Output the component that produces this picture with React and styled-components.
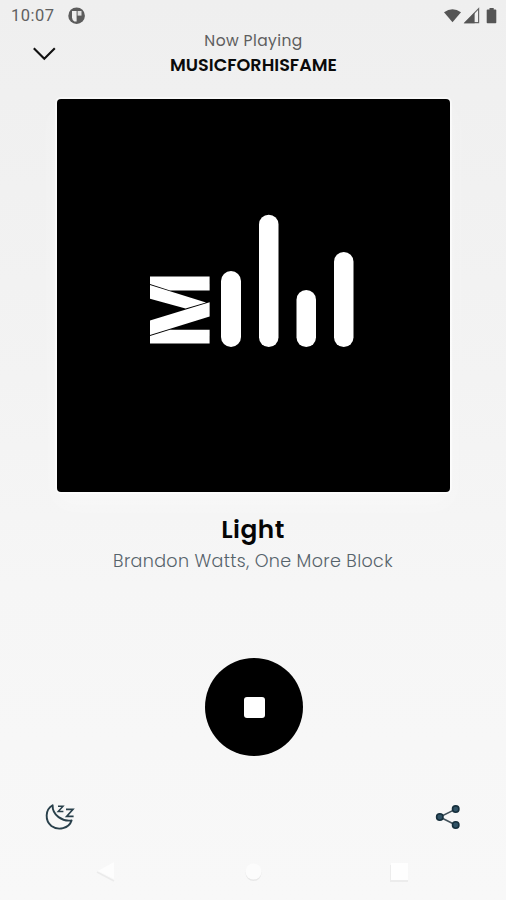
import React from 'react'
import styled, { createGlobalStyle } from 'styled-components'

const App = () => {
  return (
    <Screen>
      <GlobalStyle />
      <StatusBar>
        <Clock>10:07</Clock>
        <NotificationIcon />
        <StatusIcons />
      </StatusBar>
      <Header>
        <IconButton aria-label="Close player">
          <svg width="24" height="16" viewBox="0 0 24 16" fill="none">
            <path d="M1.8 2.2 12.3 12.8 22.8 2.2" stroke="#111" strokeWidth="2.1" />
          </svg>
        </IconButton>
        <Heading>
          <Caption>Now Playing</Caption>
          <Station>MUSICFORHISFAME</Station>
        </Heading>
      </Header>
      <Cover>
        <Logo />
      </Cover>
      <Track>
        <Title>Light</Title>
        <Artist>Brandon Watts, One More Block</Artist>
      </Track>
      <StopButton aria-label="Stop">
        <StopSquare />
      </StopButton>
      <Actions>
        <IconButton aria-label="Sleep timer">
          <SleepIcon />
        </IconButton>
        <IconButton aria-label="Share">
          <ShareIcon />
        </IconButton>
      </Actions>
      <SystemNav />
    </Screen>
  )
}

const NotificationIcon = () => (
  <svg width="18" height="18" viewBox="0 0 18 18">
    <circle cx="8.6" cy="8.7" r="8.3" fill="#5c5c5c" />
    <path d="M4 4h4.6v10.4H6.4Q4 13 4 10.6z" fill="#f0f0f0" />
    <path d="M9.6 4h3.9v4.6H9.6z" fill="#e0e0e0" />
  </svg>
)

const StatusIcons = () => (
  <svg width="56" height="20" viewBox="0 0 56 20" fill="#555">
    <path d="M2 6.2Q10.5.4 19 6.2l-8.5 10z" />
    <path d="M23 16.7 36.6 2.7v14z" fill="none" stroke="#666" strokeWidth="1.2" />
    <path d="M22 17.2 32.6 6.4v10.8z" />
    <path d="M45.5 3.4h2V2h4.2v1.4h1.8q.8 0 .8.8v12.2q0 .8-.8.8h-8q-.8 0-.8-.8V4.2q0-.8.8-.8z" />
  </svg>
)

const Logo = () => (
  <svg width="204" height="134" viewBox="0 0 204 134" fill="#fff">
    <path d="M0 62.5h59.6V76.4H20L0 70.1z" />
    <path d="M0 71 56 88.4 35.5 94.6 0 84.7z" />
    <path d="M59.6 88.3v14.3L0 121.1v-14.6z" />
    <path d="M0 122 20 115.8h39.6v13.6H0z" />
    <rect x="71" y="57" width="20" height="76" rx="10" />
    <rect x="109" y=".7" width="19.5" height="132.3" rx="9.75" />
    <rect x="146.5" y="76" width="19.5" height="57" rx="9.75" />
    <rect x="184" y="38" width="19.5" height="95" rx="9.75" />
  </svg>
)

const SleepIcon = () => (
  <svg width="32" height="30" viewBox="0 0 32 30" fill="none" stroke="#29404b" strokeWidth="1.9">
    <path d="M8.6 3.2C.9 7.6.9 18.7 7.4 24c6.8 5 17.6 2.6 20.2-5.6C18.5 19.8 8.3 13.3 8.6 3.2z" strokeLinejoin="round" />
    <path d="M14 4.2h5L14.2 9.4h5.2" strokeWidth="1.5" />
    <path d="M22 7.4h7l-6.4 7h7" strokeWidth="1.6" />
  </svg>
)

const ShareIcon = () => (
  <svg width="26" height="26" viewBox="0 0 26 26">
    <path d="M20.7 5.1 4.8 13l15.9 8" fill="none" stroke="#42515a" strokeWidth="1.6" />
    <g fill="#315366" stroke="#17303d" strokeWidth="1.6">
      <circle cx="20.7" cy="5.1" r="3.2" />
      <circle cx="4.8" cy="13" r="3.2" />
      <circle cx="20.7" cy="21" r="3.2" />
    </g>
  </svg>
)

const SystemNav = () => (
  <NavBar>
    <svg width="22" height="22" viewBox="0 0 22 22">
      <path d="m1 11 17 9" stroke="#ebebeb" strokeWidth="1.6" />
      <path d="M2 10 18 1v17z" fill="#fdfdfd" />
    </svg>
    <svg width="22" height="22" viewBox="0 0 22 22">
      <circle cx="11.5" cy="12" r="8" fill="#e8e8e8" />
      <circle cx="11.5" cy="10.5" r="8" fill="#fcfcfc" />
    </svg>
    <svg width="22" height="22" viewBox="0 0 22 22">
      <path d="M2 4h18v17H2z" fill="#ececec" />
      <path d="M3 2h17v17H3z" fill="#fefefe" />
    </svg>
  </NavBar>
)

export default App

const GlobalStyle = createGlobalStyle`
  * {
    box-sizing: border-box;
  }
  body {
    margin: 0;
  }
  svg {
    display: block;
  }
`

const Screen = styled.div`
  display: flex;
  flex-direction: column;
  align-items: center;
  width: 506px;
  height: 900px;
  overflow: hidden;
  background: linear-gradient(#efefef, #f3f3f3 42%, #f6f6f6 65%, #f8f8f8);
  font-family: Poppins, Inter, sans-serif;
`

const StatusBar = styled.div`
  display: flex;
  align-items: center;
  width: 100%;
  height: 31px;
  padding: 0 8px 0 11px;

  > svg:last-child {
    margin-left: auto;
  }
`

const Clock = styled.span`
  width: 57px;
  color: #606060;
  font: 16.5px Roboto, sans-serif;
  letter-spacing: 0.5px;
`

const Header = styled.header`
  display: grid;
  grid-template-columns: 60px 1fr 60px;
  width: 100%;
  height: 68px;
  padding: 0 2px 0 3px;
`

const IconButton = styled.button`
  display: flex;
  padding: 0;
  border: 0;
  background: none;

  ${Header} & {
    align-self: start;
    padding: 15px 0 0 29px;
  }
`

const Heading = styled.div`
  text-align: center;
  white-space: nowrap;
`

const Caption = styled.div`
  color: #5e5e5e;
  font-size: 15.5px;
  line-height: 20px;
  letter-spacing: 0.4px;
`

const Station = styled.div`
  padding-top: 2px;
  color: #0a0a0a;
  font-size: 17.6px;
  font-weight: 600;
  line-height: 24px;
`

const Cover = styled.div`
  flex: none;
  width: 393px;
  height: 393px;
  padding: 115px 0 0 93px;
  margin-left: 1px;
  border-radius: 4px;
  background: #000;
  box-shadow: 0 0 0 2px rgba(255, 255, 255, 0.55), 0 12px 24px rgba(255, 255, 255, 0.4);
`

const Track = styled.div`
  height: 166px;
  padding-top: 21px;
  text-align: center;
  white-space: nowrap;
`

const Title = styled.h1`
  margin: 0;
  color: #050505;
  font-size: 24.8px;
  font-weight: 600;
  line-height: 34px;
  letter-spacing: 0.5px;
`

const Artist = styled.div`
  color: #56636b;
  font-size: 17.5px;
  font-weight: 300;
  line-height: 29px;
  letter-spacing: 0.35px;
`

const StopButton = styled.button`
  display: flex;
  flex: none;
  align-items: center;
  justify-content: center;
  width: 98px;
  height: 98px;
  margin-left: 2px;
  padding: 0;
  border: 0;
  border-radius: 50%;
  background: #000;
`

const StopSquare = styled.span`
  width: 21px;
  height: 21px;
  border-radius: 3px;
  background: #fff;
`

const Actions = styled.div`
  display: flex;
  align-items: center;
  justify-content: space-between;
  width: 100%;
  height: 30px;
  margin-top: 46px;
  padding: 0 45px 0 44px;
`

const NavBar = styled.nav`
  display: flex;
  justify-content: space-between;
  width: 100%;
  margin-top: 29px;
  padding: 0 96px;
`
